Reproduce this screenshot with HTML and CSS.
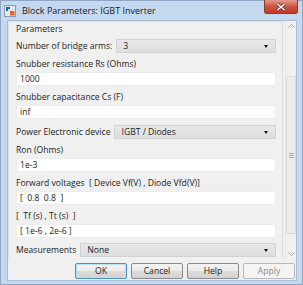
FILE: index.html
```html
<!DOCTYPE html>
<html lang="en">
<head>
    <meta charset="UTF-8">
    <title>Block Parameters: IGBT Inverter</title>
    <link rel="stylesheet" href="styles.css">
</head>
<body>
    <div class="window">
        <div class="titlebar">
            <svg class="app-icon" width="12" height="12" viewBox="0 0 12 12">
                <rect x="0.5" y="0.5" width="11" height="11" fill="#dfe7f1" stroke="#8a9bb3"/>
                <path d="M2 2 L6 2 L6 4 L4 4 L4 6 L2 6 Z" fill="#2a5fa8"/>
                <rect x="6" y="6" width="4.5" height="4.5" fill="#e0662a"/>
            </svg>
            <span class="title">Block Parameters: IGBT Inverter</span>
            <div class="close">
                <svg width="10" height="8" viewBox="0 0 10 8">
                    <path d="M1.5 1 L8.5 7 M8.5 1 L1.5 7" stroke="#6b3a34" stroke-width="3"/>
                    <path d="M1.5 1 L8.5 7 M8.5 1 L1.5 7" stroke="#ffffff" stroke-width="1.6"/>
                </svg>
            </div>
        </div>

        <div class="client">
            <div class="pane">
                <div class="group">
                    <div class="group-title">Parameters</div>

                    <div class="row first">
                        <span class="label">Number of bridge arms:</span>
                        <div class="select">3<span class="caret"></span></div>
                    </div>

                    <div class="field-label">Snubber resistance Rs (Ohms)</div>
                    <div class="input">1000</div>

                    <div class="field-label">Snubber capacitance Cs (F)</div>
                    <div class="input">inf</div>

                    <div class="row">
                        <span class="label">Power Electronic device</span>
                        <div class="select">IGBT / Diodes<span class="caret"></span></div>
                    </div>

                    <div class="field-label">Ron (Ohms)</div>
                    <div class="input">1e-3</div>

                    <div class="field-label">Forward voltages &nbsp;[ Device Vf(V) , Diode Vfd(V)]</div>
                    <div class="input">[ &nbsp;0.8 &nbsp;0.8 &nbsp;]</div>

                    <div class="field-label">[ &nbsp;Tf (s) , Tt (s) &nbsp;]</div>
                    <div class="input">[ 1e-6 , 2e-6 ]</div>

                    <div class="row last">
                        <span class="label">Measurements</span>
                        <div class="select">None<span class="caret"></span></div>
                    </div>
                </div>

                <div class="scrollbar">
                    <div class="sb-btn">
                        <svg width="7" height="4" viewBox="0 0 7 4"><path d="M0.5 3.5 L3.5 0.5 L6.5 3.5" fill="none" stroke="#a8a8a8"/></svg>
                    </div>
                    <div class="sb-track">
                        <div class="sb-thumb"><span class="grip"></span></div>
                    </div>
                    <div class="sb-btn">
                        <svg width="7" height="4" viewBox="0 0 7 4"><path d="M0.5 0.5 L3.5 3.5 L6.5 0.5" fill="none" stroke="#a8a8a8"/></svg>
                    </div>
                </div>
            </div>

            <div class="buttons">
                <button class="btn default">OK</button>
                <button class="btn">Cancel</button>
                <button class="btn">Help</button>
                <button class="btn" disabled>Apply</button>
            </div>
        </div>
    </div>
</body>
</html>
```

FILE: styles.css
```css
body {
    margin: 0;
    font-family: "Open Sans", "Liberation Sans", sans-serif;
    font-size: 8.6px;
    color: #1c1c1c;
}

.window {
    width: 303px;
    height: 285px;
    box-sizing: border-box;
    background: #c4d8ef;
    border: 1px solid #8ea6c4;
    display: flex;
    flex-direction: column;
}

.titlebar {
    height: 19px;
    display: flex;
    align-items: flex-start;
}
.app-icon {
    margin: 4px 0 0 3px;
}
.title {
    margin: 3px 0 0 6px;
    font-size: 9px;
    color: #1a1a1a;
}
.close {
    margin: -1px 4px 0 auto;
    width: 34px;
    height: 14px;
    box-sizing: border-box;
    border: 1px solid #8c3a2e;
    border-top: none;
    border-radius: 0 0 3px 3px;
    background: linear-gradient(#e19b8e 0%, #d0533f 50%, #c0392a 100%);
    display: flex;
    align-items: center;
    justify-content: center;
}

.client {
    flex: 1;
    margin: 0 5px 3px 6px;
    background: #f0f0f0;
    border: 1px solid #a9bdd6;
    display: flex;
    flex-direction: column;
}

.pane {
    height: 238px;
    display: flex;
}

.group {
    flex: 1;
    padding: 0 6px 0 7px;
    border-right: 1px solid #dedede;
    border-left: 1px solid #e2e2e2;
    border-top: 1px solid #e2e2e2;
}
.group-title {
    line-height: 14px;
}

.row {
    display: flex;
    align-items: center;
    height: 14px;
    margin-top: 6px;
}
.row.first { margin-top: 3px; }
.row.last { margin-top: 5px; }
.label {
    margin-right: 4px;
    white-space: nowrap;
}

.select {
    flex: 1;
    height: 14px;
    box-sizing: border-box;
    padding-left: 6px;
    line-height: 13px;
    background: linear-gradient(#e8e8e8, #dedede);
    border: 1px solid #d2d2d2;
    position: relative;
}
.caret {
    position: absolute;
    right: 7px;
    top: 5px;
    border-left: 2.5px solid transparent;
    border-right: 2.5px solid transparent;
    border-top: 3px solid #111;
}

.field-label {
    padding-top: 4px;
    line-height: 14px;
    margin-bottom: 1px;
    white-space: nowrap;
}
.input {
    height: 14px;
    box-sizing: border-box;
    padding-left: 3px;
    line-height: 13px;
    background: #fff;
    border: 1px solid #ececec;
    white-space: nowrap;
}

.scrollbar {
    width: 10px;
    margin-left: 2px;
    display: flex;
    flex-direction: column;
    border-left: 1px solid #e6e6e6;
}
.sb-btn {
    height: 10px;
    display: flex;
    align-items: center;
    justify-content: center;
    background: #f0f0f0;
}
.sb-track {
    flex: 1;
    padding: 45px 0 15px;
    background: #f0f0f0;
}
.sb-thumb {
    height: 100%;
    box-sizing: border-box;
    border: 1px solid #dadada;
    background: #ececec;
    display: flex;
    align-items: center;
    justify-content: center;
}
.grip {
    width: 5px;
    height: 5px;
    background: repeating-linear-gradient(#a9a9a9 0 1px, transparent 1px 2px);
}

.buttons {
    display: flex;
    justify-content: flex-end;
    gap: 4px;
    margin-top: 4px;
    padding-right: 1px;
}
.btn {
    width: 52px;
    height: 16px;
    padding: 0;
    font-family: inherit;
    font-size: 8.6px;
    color: #1c1c1c;
    border: 1px solid #8a8a8a;
    border-radius: 2px;
    background: linear-gradient(#f4f4f4 0%, #ebebeb 50%, #dcdcdc 51%, #d2d2d2 100%);
}
.btn.default {
    border-color: #4a8fc8;
    box-shadow: inset 0 0 0 1px #b9e0f5;
}
.btn:disabled {
    color: #8c8c8c;
    border-color: #b8b8b8;
    background: #f4f4f4;
}
```
